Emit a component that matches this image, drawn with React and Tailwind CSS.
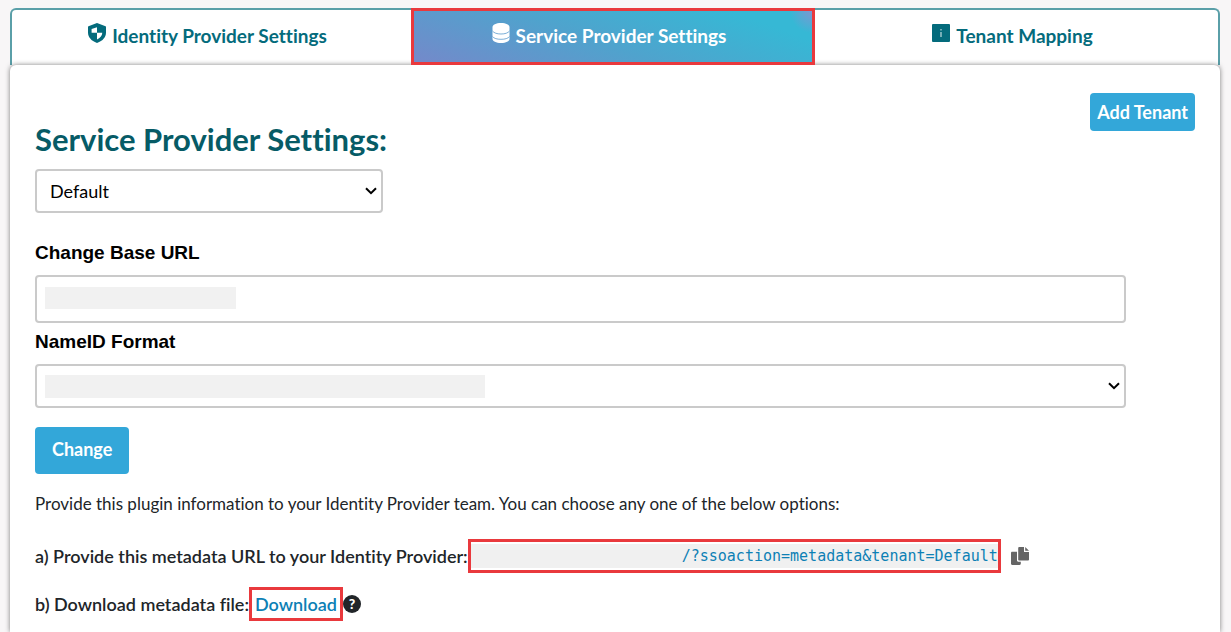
const ShieldIcon = () => (
  <svg viewBox="0 0 18 20" className="h-5 w-[18px]" aria-hidden="true">
    <path
      fill="currentColor"
      d="M9 0 17.5 3.2C17.9 3.4 18 3.7 18 4.1V9.5C18 14 15 17.8 9 20 3 17.8 0 14 0 9.5V4.1C0 3.7.1 3.4.5 3.2Z"
    />
    <path fill="#fff" d="M9 4.2V9.8H3.6V6ZM9 9.8H14.3C14.1 12.8 12 15.2 9 16.4Z" />
  </svg>
);

const DatabaseIcon = () => (
  <svg viewBox="0 0 18 20" className="h-5 w-[18px]" aria-hidden="true">
    <path fill="currentColor" d="M.5 4C.5 1.8 4 0 9 0s8.500 1.800 8.500 4v12c0 2.200-3.500 4-8.500 4S.5 18.200.5 16Z" />
    <path
      fill="none"
      stroke="#5b9bcd"
      strokeWidth="0.8"
      d="M.5 8C2 10 5 11 9 11s7-1 8.500-3M.5 13.500C2 15.500 5 16.300 9 16.300s7-.8 8.500-2.800"
    />
  </svg>
);

const InfoIcon = () => (
  <svg viewBox="0 0 18 18" className="size-[18px]" aria-hidden="true">
    <rect width="18" height="18" rx="1" fill="currentColor" />
    <path fill="#a5cbd1" d="M8.300 5h1.400v1.400H8.300ZM8.300 8h1.400v5H8.300Z" />
  </svg>
);

const CopyIcon = () => (
  <svg viewBox="0 0 18 18" className="size-[18px]" aria-hidden="true">
    <path fill="currentColor" d="M1.2 4.8H6V13.6C6 14.3 6.5 14.8 7.2 14.8H9.8V16.8C9.8 17.5 9.3 18 8.6 18H1.2C.5 18 0 17.5 0 16.8V6C0 5.3.5 4.8 1.2 4.8Z" />
    <path fill="currentColor" d="M8.4 0H13V5H18V12.4C18 13.1 17.5 13.6 16.8 13.6H8.4C7.7 13.6 7.2 13.1 7.2 12.4V1.2C7.2.5 7.7 0 8.4 0ZM14.2 0 18 3.8H14.2Z" />
  </svg>
);

const Chevron = () => (
  <svg
    viewBox="0 0 12 8"
    className="pointer-events-none absolute top-[18px] right-[6px] h-2 w-3 text-black"
    aria-hidden="true"
  >
    <path fill="none" stroke="currentColor" strokeWidth="2" d="m1 1.200 5 5 5-5" />
  </svg>
);

const tabs = [
  { label: "Identity Provider Settings", icon: <ShieldIcon /> },
  { label: "Service Provider Settings", icon: <DatabaseIcon />, active: true },
  { label: "Tenant Mapping", icon: <InfoIcon /> },
];

const tabClass = "flex items-center justify-center gap-[6px] pr-2 text-[19px] font-bold";
const fieldClass = "block w-full appearance-none rounded border-2 border-[#cacaca] bg-white px-[13px] text-lg text-black";
const labelClass = "block font-['Liberation_Sans',Arial,sans-serif] text-[19px] leading-6 font-bold text-black";

export default function App() {
  return (
    <div className="flex min-h-screen flex-col bg-[#f8f6f7] pt-2 pr-[11px] pl-[10px] font-[Lato,sans-serif] text-lg text-[#212529] [font-variant-ligatures:no-common-ligatures]">
      <nav className="grid h-[57px] grid-cols-[399fr_404fr_403fr] rounded-t-md border-2 border-b-0 border-[#5a9fa8] bg-white">
        {tabs.map((tab) => (
          <button
            key={tab.label}
            type="button"
            className={
              tab.active
                ? `${tabClass} relative z-10 -mt-[2px] border-3 border-[#e9393d] bg-[radial-gradient(circle_at_100%_0%,#7d97d2_0px,transparent_22px),linear-gradient(20deg,#7489ca_0%,#4fa3cd_45%,#36b8d5_85%)] pb-[2px] text-white`
                : `${tabClass} pb-1 text-[#046b7c]`
            }
          >
            <span className="pb-[6px]">{tab.icon}</span>
            {tab.label}
          </button>
        ))}
      </nav>

      <main className="flex-1 rounded-t-md bg-white px-[25px] pt-7 shadow-[0_0_5px_rgba(0,0,0,0.5)]">
        <div className="flex items-start justify-between">
          <h1 className="pt-[26px] pb-[2px] text-[31px] leading-10 font-bold text-[#065b66]">Service Provider Settings:</h1>
          <button type="button" className="h-[38px] rounded bg-[#33a7d9] px-[7px] text-lg font-bold text-white">
            Add Tenant
          </button>
        </div>

        <div className="relative mt-2 max-w-[348px]">
          <select aria-label="Tenant" className={`${fieldClass} h-11`}>
            <option>Default</option>
          </select>
          <Chevron />
        </div>

        <div className="mr-[69px]">
          <label htmlFor="base-url" className={`${labelClass} mt-7`}>
            Change Base URL
          </label>
          <div className="relative mt-[10px]">
            <input id="base-url" type="text" className={`${fieldClass} h-12`} />
            <span className="absolute top-3 left-[10px] h-[22px] w-[191px] bg-[#f1f1f1]" />
          </div>

          <label htmlFor="nameid-format" className={`${labelClass} mt-[7px]`}>
            NameID Format
          </label>
          <div className="relative mt-[10px]">
            <select id="nameid-format" className={`${fieldClass} h-11`}>
              <option></option>
            </select>
            <span className="absolute top-[11px] left-[10px] h-[23px] w-[440px] bg-[#f1f1f1]" />
            <Chevron />
          </div>
        </div>

        <button type="button" className="mt-[19px] h-[47px] rounded bg-[#33a7d9] px-[17px] pb-[3px] text-lg font-bold text-white">
          Change
        </button>

        <p className="mt-4 text-[17px] leading-7">
          Provide this plugin information to your Identity Provider team. You can choose any one of the below options:
        </p>

        <div className="mt-[21px] flex items-center font-semibold">
          <span>a) Provide this metadata URL to your Identity Provider:</span>
          <a
            href="#metadata"
            className="flex h-[34px] items-center border-3 border-[#e9393d] font-['DejaVu_Sans_Mono',monospace] text-[15px] font-normal text-[#0d80b5]"
          >
            <code className="bg-[#f0f0f0] pl-[211px] font-[inherit] leading-6">/?ssoaction=metadata&amp;tenant=Default</code>
          </a>
          <button type="button" aria-label="Copy metadata URL" className="ml-[10px] text-[#656565]">
            <CopyIcon />
          </button>
        </div>

        <div className="mt-[14px] flex items-center font-semibold">
          <span>b) Download metadata file:</span>
          <a href="#download" className="flex h-[34px] items-center border-3 border-[#e9393d] px-[3px] text-[#0d80b5]">
            Download
          </a>
          <button
            type="button"
            aria-label="Help"
            className="size-[18px] rounded-full bg-[#212529] text-center text-sm leading-[18px] font-black text-white"
          >
            ?
          </button>
        </div>
      </main>
    </div>
  );
}
